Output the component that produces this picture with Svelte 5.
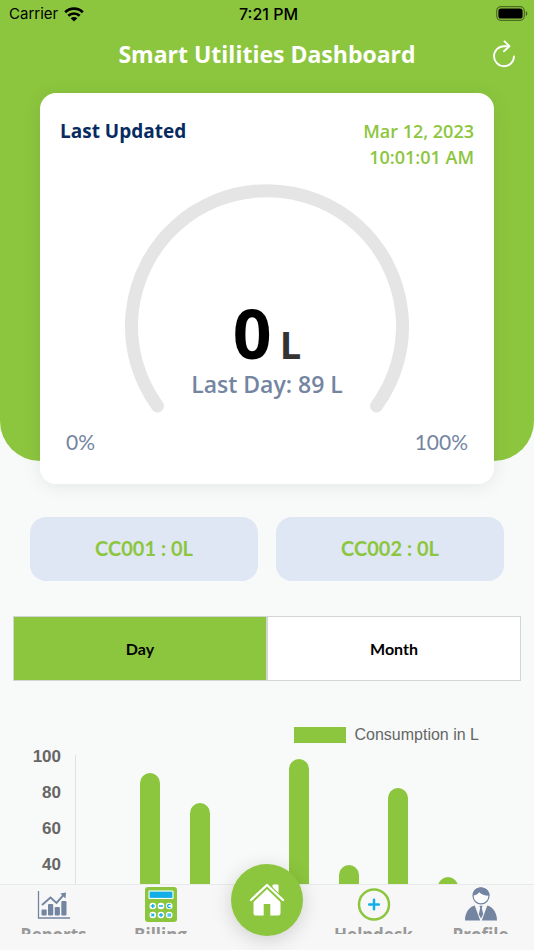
<script>
  let period = $state('Day');
  const periods = ['Day', 'Month'];
  const meters = ['CC001 : 0L', 'CC002 : 0L'];
  const ticks = [100, 80, 60, 40];
  const bars = [0, 90, 73.5, 0, 98, 39.5, 82, 32.5, 0];
</script>

<div class="screen">
  <main>
    <section class="hero">
      <div class="status">
        <div class="carrier">
          <span>Carrier</span>
          <svg width="20" height="15" viewBox="0 0 20 15" aria-hidden="true">
            <g fill="none" stroke="#000" stroke-width="2.7">
              <path d="M1.2 5.3a12.6 12.6 0 0 1 17.6 0" />
              <path d="M4.3 8.8a8.2 8.2 0 0 1 11.4 0" />
            </g>
            <path d="M10 14.6 6.7 11.3a4.7 4.7 0 0 1 6.6 0z" />
          </svg>
        </div>
        <span class="clock">7:21 PM</span>
        <svg class="battery" width="32" height="16" viewBox="0 0 32 16" aria-hidden="true">
          <rect x="0.7" y="0.7" width="27.6" height="13.6" rx="4.2" fill="none" stroke="#000" stroke-opacity=".45" stroke-width="1.2" />
          <rect x="2.4" y="2.4" width="24.2" height="10.2" rx="2.6" />
          <path d="M29.8 5v5c2-.8 2-4.200 0-5z" fill-opacity=".5" />
        </svg>
      </div>
      <header>
        <h1>Smart Utilities Dashboard</h1>
        <button class="refresh" aria-label="Refresh">
          <svg width="24" height="28" viewBox="0 0 24 28" fill="none" stroke="#fff" stroke-width="1.9" stroke-linecap="round" stroke-linejoin="round">
            <path d="M22 16.500A10 10 0 1 1 12 6.200h5" />
            <path d="M12.500 1.300 17.400 6.200 12 11.300" />
          </svg>
        </button>
      </header>
      <article class="card">
        <div class="updated">
          <h2>Last Updated</h2>
          <p>Mar 12, 2023<br />10:01:01 AM</p>
        </div>
        <div class="gauge">
          <svg viewBox="0 0 284 230" aria-hidden="true">
            <path d="M32.500 222A135.500 135.500 0 1 1 251.500 222" fill="none" stroke="#e5e5e5" stroke-width="13" stroke-linecap="round" />
          </svg>
          <div class="reading">
            <div class="value"><strong>0</strong><span>L</span></div>
            <p>Last Day: 89 L</p>
          </div>
        </div>
        <div class="range"><span>0%</span><span>100%</span></div>
      </article>
    </section>

    <section class="meters">
      {#each meters as meter}
        <button>{meter}</button>
      {/each}
    </section>

    <section class="periods">
      {#each periods as name}
        <button class:active={period === name} aria-pressed={period === name} onclick={() => (period = name)}>{name}</button>
      {/each}
    </section>

    <section class="chart">
      <div class="legend"><i></i><span>Consumption in L</span></div>
      <div class="graph">
        <div class="scale">
          {#each ticks as tick}<span>{tick}</span>{/each}
        </div>
        <div class="plot">
          {#each bars as value}
            <div class="slot"><div class="bar" style="height: {value}%"></div></div>
          {/each}
        </div>
      </div>
    </section>
  </main>

  <nav>
    <a href="#reports">
      <svg width="36" height="36" viewBox="0 0 36 36" fill="#7485a2" aria-hidden="true">
        <path d="M2.500 4v27H34" fill="none" stroke="#7485a2" stroke-width="1.300" />
        <rect x="5.500" y="22.500" width="5.200" height="6" rx="1" />
        <rect x="12" y="17" width="5.200" height="11.500" rx="1" />
        <rect x="18.700" y="20" width="5.200" height="8.500" rx="1" />
        <rect x="25.300" y="14" width="5.200" height="14.500" rx="1" />
        <path d="M6 18 14.500 10.500 20.500 16 28 7.500" fill="none" stroke="#7485a2" stroke-width="1.900" />
        <path d="M24.300 6.500 30 5.500 29.500 11.500z" />
      </svg>
      <span>Reports</span>
    </a>
    <a href="#billing">
      <svg width="36" height="36" viewBox="0 0 36 36" aria-hidden="true">
        <rect x="2" y="0" width="32" height="35" rx="3" fill="#8cc63e" />
        <rect x="5.500" y="3.500" width="25" height="8.500" rx="1" fill="#fff" />
        <rect x="6.600" y="4.600" width="22.800" height="6.300" fill="#12aee6" />
        <g fill="#fff">
          <circle cx="9.800" cy="19" r="3.300" /><circle cx="18" cy="19" r="3.300" /><circle cx="26.200" cy="19" r="3.300" />
          <circle cx="9.800" cy="28" r="3.300" /><circle cx="18" cy="28" r="3.300" /><circle cx="26.200" cy="28" r="3.300" />
        </g>
        <g fill="none" stroke="#12aee6" stroke-width="1.300">
          <path d="M7.800 19h4M9.800 17v4M16 19h4M27.600 17.800a1.700 1.700 0 1 0 0 2.400" />
          <path d="m8.400 26.600 2.800 2.800m0-2.800-2.800 2.800M16 28h4M18 26v4M24.400 27.200h3.600M24.400 28.900h3.600" />
        </g>
      </svg>
      <span>Billing</span>
    </a>
    <a class="home" href="#home" aria-label="Home">
      <svg width="36" height="34" viewBox="0 0 36 34" aria-hidden="true">
        <path d="M23.500 2.500a1 1 0 0 1 1-1h4a1 1 0 0 1 1 1V13l-6-5z" fill="#fff" />
        <path d="M18 6 4.500 19v11.500a2 2 0 0 0 2 2h8.200V21h6.600v11.500h8.200a2 2 0 0 0 2-2V19z" fill="#fff" />
        <path d="M2 17.700 18 2.200 34 17.700" fill="none" stroke="#8cc63e" stroke-width="5" />
        <path d="M2 17 18 2 34 17" fill="none" stroke="#fff" stroke-width="2.300" stroke-linecap="round" stroke-linejoin="round" />
      </svg>
    </a>
    <a href="#helpdesk">
      <svg width="36" height="36" viewBox="0 0 36 36" fill="none" aria-hidden="true">
        <circle cx="18" cy="17.500" r="15" stroke="#8cc63e" stroke-width="2.500" />
        <path d="M18 12.700v9.600M13.200 17.500h9.600" stroke="#12aee6" stroke-width="2.500" stroke-linecap="round" />
      </svg>
      <span>Helpdesk</span>
    </a>
    <a href="#profile">
      <svg width="36" height="36" viewBox="0 0 36 36" fill="#7485a2" aria-hidden="true">
        <circle cx="18" cy="8.800" r="8" fill="#fff" stroke="#7485a2" stroke-width="1.200" />
        <path d="M10 8.500C9.600 3 13.500.4 18 .4s8.800 3.200 8.300 8.300C22 8.900 18.500 7.400 16.300 5.200 14.900 7.100 12.500 8.200 10 8.500z" />
        <path d="M11.700 18.500 17.200 33.500H2c0-7.500 3.700-13.300 9.700-15zM24.300 18.500 18.800 33.500H34c0-7.500-3.700-13.300-9.700-15z" />
        <path d="M16.500 18.800h3l-.7 2.300 1.400 6.200-2.200 4.200-2.200-4.200 1.400-6.200z" />
      </svg>
      <span>Profile</span>
    </a>
  </nav>
</div>

<style>
  :global(body) { margin: 0; }
  .screen {
    --green: #8cc63e;
    --slate: #7485a2;
    display: flex;
    flex-direction: column;
    height: 100vh;
    background: #f8faf9;
    font-family: Lato, "Open Sans", sans-serif;
  }
  .screen * { box-sizing: border-box; }
  h1, h2, p { margin: 0; }
  button { font: inherit; margin: 0; padding: 0; border: 0; background: none; cursor: pointer; }
  main { flex: 1; min-height: 0; overflow: hidden; }

  .hero { display: flow-root; background: var(--green); border-radius: 0 0 40px 40px; }
  .status {
    display: grid;
    grid-template-columns: 1fr auto 1fr;
    align-items: center;
    height: 28px;
    padding: 0 6px 0 9px;
    font: 400 15px/20px Inter, sans-serif;
    color: #000;
  }
  .carrier { display: flex; align-items: center; gap: 6px; }
  .clock { font-size: 16px; font-weight: 500; }
  .battery { justify-self: end; }
  header {
    display: grid;
    grid-template-columns: 24px 1fr 24px;
    align-items: start;
    height: 53px;
    padding: 12px 18px 0;
  }
  h1 {
    grid-column: 2;
    text-align: center;
    color: #fff;
    font: 700 23px/28px "Open Sans", sans-serif;
  }
  .refresh { display: flex; }
  .card {
    position: relative;
    margin: 12px 40px -23px;
    padding: 25px 20px 28px;
    border-radius: 16px;
    background: #fff;
    box-shadow: 0 2px 20px rgba(0, 0, 0, .08);
  }
  .updated {
    display: flex;
    justify-content: space-between;
    font: 600 18px/26px "Open Sans", sans-serif;
  }
  h2 { font: inherit; font-size: 19px; font-weight: 700; color: #072b61; }
  .updated p { text-align: right; color: var(--green); }
  .gauge { display: grid; justify-items: center; margin-top: 14px; }
  .gauge > * { grid-area: 1 / 1; }
  .gauge svg { width: 284px; max-width: 100%; }
  .reading { align-self: end; padding-bottom: 16px; text-align: center; }
  .value {
    display: flex;
    justify-content: center;
    align-items: baseline;
    gap: 8px;
    font: 700 38px/52px "Open Sans", sans-serif;
    color: #333;
  }
  .value strong { font-size: 68px; font-weight: 700; color: #000; }
  .reading p { font: 600 23px/28px "Open Sans", sans-serif; color: var(--slate); }
  .range {
    display: flex;
    justify-content: space-between;
    padding: 0 6px;
    margin-top: 14px;
    font-size: 21px;
    line-height: 28px;
    color: var(--slate);
  }

  .meters { display: flex; gap: 18px; padding: 56px 30px 0; }
  .meters button {
    flex: 1;
    height: 64px;
    padding-bottom: 2px;
    border-radius: 16px;
    background: #dfe6f4;
    color: var(--green);
    font-size: 20px;
    font-weight: 700;
  }
  .periods { display: flex; padding: 35px 13px 0; }
  .periods button {
    flex: 1;
    height: 65px;
    border: 1px solid #d3d5d4;
    background: #fff;
    color: #000;
    font-size: 16px;
    font-weight: 700;
  }
  .periods .active { background: var(--green); }

  .chart { padding: 44px 12px 0 14px; font-family: "Liberation Sans", Arial, sans-serif; color: #666; }
  .legend {
    display: flex;
    justify-content: flex-end;
    align-items: center;
    gap: 8px;
    padding-right: 43px;
    font-size: 16px;
    line-height: 20px;
  }
  .legend i { width: 52px; height: 16px; background: var(--green); }
  .graph { display: flex; gap: 14px; margin-top: 2px; }
  .scale { width: 47px; text-align: right; font-size: 17px; font-weight: 700; line-height: 20px; }
  .scale span { display: block; height: 36px; }
  .plot {
    flex: 1;
    display: flex;
    height: 181px;
    margin-top: 8px;
    border-left: 1px solid #e0e2e1;
  }
  .slot { flex: 1; display: flex; justify-content: center; align-items: flex-end; }
  .bar { width: 20px; border-radius: 10px 10px 0 0; background: var(--green); }

  nav {
    position: relative;
    display: flex;
    height: 66px;
    border-top: 1px solid #e8eaea;
    background: #f7f7f7;
  }
  nav a {
    flex: 1;
    display: flex;
    flex-direction: column;
    align-items: center;
    gap: 2px;
    height: 49px;
    padding-top: 2px;
    overflow: hidden;
    color: #999;
    font: 700 17px/20px "Open Sans", sans-serif;
    text-decoration: none;
  }
  nav svg { flex: none; }
  nav .home {
    flex: none;
    justify-content: center;
    width: 72px;
    height: 72px;
    margin: -21px 17px 0;
    padding: 0;
    border-radius: 50%;
    background: var(--green);
    box-shadow: 0 4px 20px rgba(0, 0, 0, .16);
  }
</style>
